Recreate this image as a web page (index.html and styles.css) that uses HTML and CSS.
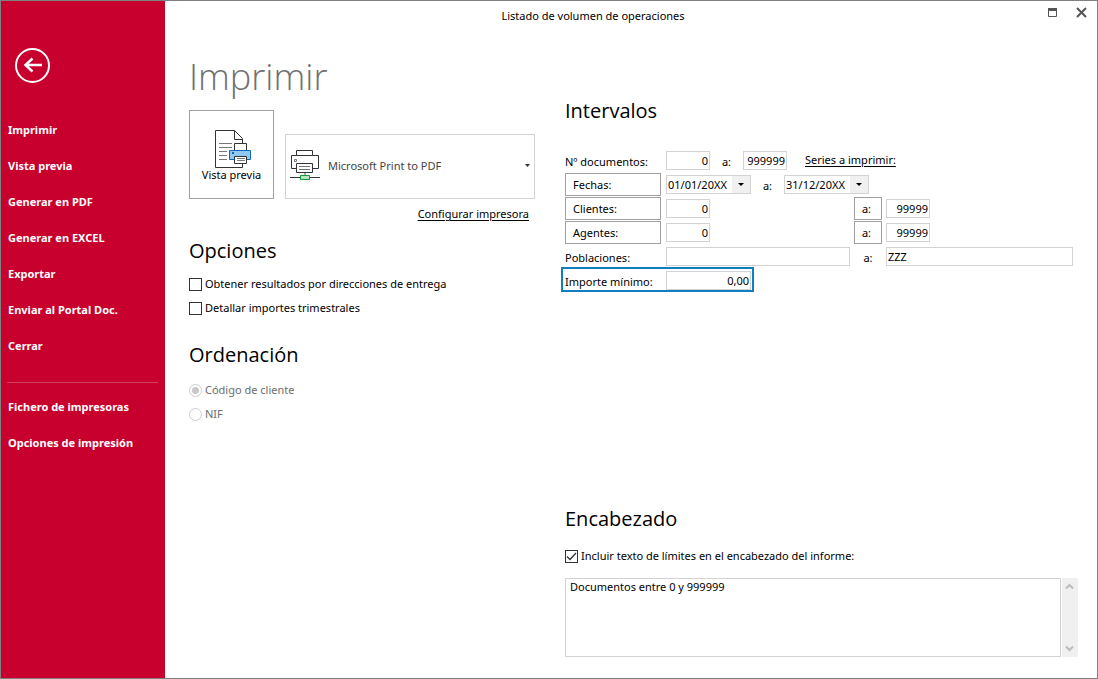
FILE: index.html
```
<!DOCTYPE html>
<html lang="es">
<head>
<meta charset="utf-8">
<meta name="viewport" content="width=device-width, initial-scale=1">
<title>Listado de volumen de operaciones</title>
<link rel="stylesheet" href="styles.css">
</head>
<body>
<div class="window">
  <nav class="sidebar">
    <button class="back" type="button" aria-label="Volver">
      <svg width="36" height="36" viewBox="0 0 36 36" fill="none" stroke="#fff">
        <circle cx="17.5" cy="17.5" r="16.5" stroke-width="2"/>
        <path d="M27 17H10M17.500 10.500L10.500 17l7 6.500" stroke-width="2.500"/>
      </svg>
    </button>
    <ul class="menu">
      <li><button type="button">Imprimir</button></li>
      <li><button type="button">Vista previa</button></li>
      <li><button type="button">Generar en PDF</button></li>
      <li><button type="button">Generar en EXCEL</button></li>
      <li><button type="button">Exportar</button></li>
      <li><button type="button">Enviar al Portal Doc.</button></li>
      <li><button type="button">Cerrar</button></li>
    </ul>
    <hr class="divider">
    <ul class="menu">
      <li><button type="button">Fichero de impresoras</button></li>
      <li><button type="button">Opciones de impresión</button></li>
    </ul>
  </nav>

  <div class="content">
    <header class="titlebar">
      <div class="title">Listado de volumen de operaciones</div>
      <div class="controls">
        <button type="button" aria-label="Maximizar">
          <svg width="9" height="9" viewBox="0 0 9 9"><path d="M.5.5h8v8h-8z" fill="none" stroke="#555"/><path d="M0 0h9v3H0z" fill="#555"/></svg>
        </button>
        <button type="button" aria-label="Cerrar ventana">
          <svg width="11" height="11" viewBox="0 0 11 11"><path d="M1 1l9 9M10 1l-9 9" stroke="#555" stroke-width="2"/></svg>
        </button>
      </div>
    </header>

    <main class="panes">
      <div class="pane-left">
        <h1>Imprimir</h1>
        <div class="print-row">
          <button class="preview" type="button">
            <svg width="37" height="38" viewBox="0 0 37 38" fill="none">
              <path d="M.5.5h19l8 8v29H.5z" fill="#fff" stroke="#333"/>
              <path d="M19.500.5v9h8" stroke="#333"/>
              <path d="M4 13.500h13M4 17.500h13M4 21.500h8M4 25.500h8M4 29.500h8" stroke="#777"/>
              <path d="M19.500 13.500h12v7h-12z" fill="#fff" stroke="#333"/>
              <path d="M14.500 20.500h21v9h-21z" fill="#92c8ef" stroke="#1066b8"/>
              <path d="M17 22h2v2h-2z" fill="#1066b8"/>
              <path d="M19.500 26.500h12v7h-12z" fill="#fff" stroke="#333"/>
              <path d="M22 28.500h8M22 30.500h8" stroke="#777"/>
            </svg>
            <span>Vista previa</span>
          </button>
          <div class="printer">
            <svg width="30" height="31" viewBox="0 0 30 31" fill="none">
              <path d="M1.500 5.500h27v13h-27z" fill="#fff" stroke="#333"/>
              <path d="M6.500.5h16v5h-16zM6.500 13.500h16v9h-16z" fill="#fff" stroke="#333"/>
              <path d="M4.500 9.500h2v2h-2z" stroke="#777"/>
              <path d="M9 16.500h11M9 19.500h11" stroke="#777"/>
              <path d="M15 23v3" stroke="#aaa" stroke-width="2"/>
              <path d="M0 27.500h30" stroke="#333"/>
              <path d="M10.500 25.500h9v4h-9z" fill="#b8e6c0" stroke="#0b9a3c"/>
            </svg>
            <select aria-label="Impresora"><option>Microsoft Print to PDF</option></select>
          </div>
        </div>
        <div class="configure"><a href="#">Configurar impresora</a></div>

        <section class="group">
          <h2>Opciones</h2>
          <label class="check"><input type="checkbox">Obtener resultados por direcciones de entrega</label>
          <label class="check"><input type="checkbox">Detallar importes trimestrales</label>
        </section>

        <section class="group">
          <h2>Ordenación</h2>
          <label class="check off"><input type="radio" name="orden" checked disabled>Código de cliente</label>
          <label class="check off"><input type="radio" name="orden" disabled>NIF</label>
        </section>
      </div>

      <div class="pane-right">
        <section class="ranges">
          <h2>Intervalos</h2>
          <div class="row row-docs">
            <label for="doc-from">Nº documentos:</label>
            <input id="doc-from" class="num" type="text" value="0">
            <label class="to" for="doc-to">a:</label>
            <input id="doc-to" class="num" type="text" value="999999">
            <a href="#">Series a imprimir:</a>
          </div>
          <div class="row row-dates">
            <button class="key" type="button">Fechas:</button>
            <select class="date" aria-label="Fecha inicial"><option>01/01/20XX</option></select>
            <label class="to" for="date-to">a:</label>
            <select id="date-to" class="date"><option>31/12/20XX</option></select>
          </div>
          <div class="row row-wide">
            <button class="key" type="button">Clientes:</button>
            <input class="num" type="text" value="0" aria-label="Cliente inicial">
            <button class="key to" type="button">a:</button>
            <input class="num" type="text" value="99999" aria-label="Cliente final">
          </div>
          <div class="row row-wide">
            <button class="key" type="button">Agentes:</button>
            <input class="num" type="text" value="0" aria-label="Agente inicial">
            <button class="key to" type="button">a:</button>
            <input class="num" type="text" value="99999" aria-label="Agente final">
          </div>
          <div class="row row-wide">
            <label for="city-from">Poblaciones:</label>
            <input id="city-from" type="text">
            <label class="to" for="city-to">a:</label>
            <input id="city-to" type="text" value="ZZZ">
          </div>
          <div class="row row-amount">
            <label for="amount">Importe mínimo:</label>
            <input id="amount" class="amount" type="text" value="0,00">
          </div>
        </section>

        <section class="heading">
          <h2>Encabezado</h2>
          <label class="check"><input type="checkbox" checked>Incluir texto de límites en el encabezado del informe:</label>
          <div class="memo">
            <textarea aria-label="Texto del encabezado">Documentos entre 0 y 999999</textarea>
            <div class="scroll">
              <button type="button" aria-label="Subir"><svg width="9" height="7" viewBox="0 0 9 7"><path d="M1 5.500l3.500-3.500L8 5.500" fill="none" stroke="#bbb" stroke-width="2"/></svg></button>
              <button type="button" aria-label="Bajar"><svg width="9" height="7" viewBox="0 0 9 7"><path d="M1 1.500L4.500 5 8 1.500" fill="none" stroke="#bbb" stroke-width="2"/></svg></button>
            </div>
          </div>
        </section>
      </div>
    </main>
  </div>
</div>
</body>
</html>
```
FILE: styles.css
```
* {
  box-sizing: border-box;
}

body {
  margin: 0;
  font-family: "Noto Sans", "Open Sans", sans-serif;
  font-size: 11px;
  line-height: 16px;
  color: #000;
  background: #fff;
}

button,
input,
select,
textarea {
  margin: 0;
  font: inherit;
  color: inherit;
  border-radius: 0;
}

button {
  padding: 0;
  border: 0;
  background: none;
}

svg {
  display: block;
}

a {
  color: inherit;
  text-underline-offset: 2px;
}

h1,
h2 {
  margin: 0;
  font-family: "Open Sans", "Noto Sans", sans-serif;
  font-weight: 400;
}

h1 {
  font-size: 36px;
  font-weight: 300;
  line-height: 48px;
  color: #707070;
}

h2 {
  font-size: 20px;
  line-height: 28px;
}

.window {
  display: flex;
  min-height: 100vh;
  border: 1px solid #808080;
}

/* Sidebar */
.sidebar {
  flex: none;
  width: 164px;
  padding: 47px 7px 0 6px;
  color: #fff;
  background: #c8002d;
}

.back {
  display: block;
  margin: 0 8px 28px;
}

.menu {
  margin: 0;
  padding: 0 0 0 1px;
  list-style: none;
}

.menu button {
  display: block;
  width: 100%;
  height: 36px;
  text-align: left;
  font-weight: 700;
}

.divider {
  height: 1px;
  margin: 18px 0 6px;
  border: 0;
  background: #d3405f;
}

/* Title bar */
.content {
  flex: 1;
  display: flex;
  flex-direction: column;
}

.titlebar {
  display: flex;
  height: 30px;
}

.title {
  flex: 1;
  line-height: 30px;
  text-align: center;
}

.controls {
  display: flex;
  align-items: center;
  justify-content: flex-end;
  gap: 19px;
  width: 76px;
  height: 23px;
  padding-right: 10px;
}

/* Columns */
.panes {
  flex: 1;
  display: grid;
  grid-template-columns: 346px 1fr;
  gap: 30px;
  padding: 22px 19px 21px 24px;
}

.print-row {
  display: flex;
  align-items: flex-end;
  gap: 11px;
  margin-top: 9px;
}

.preview {
  display: flex;
  flex-direction: column;
  align-items: center;
  width: 85px;
  height: 89px;
  padding-top: 19px;
  border: 1px solid #a0a0a0;
}

.preview svg {
  margin: 0 0 -1px 4px;
}

.printer {
  flex: 1;
  display: flex;
  align-items: center;
  height: 65px;
  padding: 0 3px 2px 4px;
  border: 1px solid #d3d3d3;
}

select {
  appearance: none;
  border: 0;
  background: #fff url("data:image/svg+xml,%3Csvg xmlns='http://www.w3.org/2000/svg' width='5' height='3'%3E%3Cpath d='M0 0h5L2.500 3z' fill='%23333'/%3E%3C/svg%3E") no-repeat right 1px center;
}

.printer select {
  flex: 1;
  height: 48px;
  padding: 0 8px;
  color: #444;
}

.configure {
  margin: 7px 6px 0;
  text-align: right;
}

.group {
  margin-top: 15px;
}

.group + .group {
  margin-top: 21px;
}

.group h2 {
  margin-bottom: 7px;
}

.group + .group h2 {
  margin-bottom: 9px;
}

.check {
  display: flex;
  align-items: center;
  gap: 3px;
  height: 24px;
}

.check input {
  appearance: none;
  width: 13px;
  height: 13px;
  border: 1px solid #333;
  background: #fff;
}

.check input:checked {
  background: #fff url("data:image/svg+xml,%3Csvg xmlns='http://www.w3.org/2000/svg' width='11' height='11'%3E%3Cpath d='M1 5.500l3 3L10 2' fill='none' stroke='%23333' stroke-width='1.300'/%3E%3C/svg%3E") center no-repeat;
}

.check input[type="radio"] {
  border-color: #ccc;
  border-radius: 50%;
}

.check input[type="radio"]:checked {
  background: radial-gradient(circle, #c8c8c8 3px, #fff 4px);
}

.off {
  color: #6d6d6d;
}

/* Ranges */
.pane-right {
  display: flex;
  flex-direction: column;
  justify-content: space-between;
}

.ranges {
  padding: 44px 5px 0 0;
}

.ranges h2 {
  margin-bottom: 24px;
}

.row {
  display: grid;
  align-items: start;
  height: 24px;
}

.row-docs {
  grid-template-columns: 101px 44px 33px 44px 1fr;
}

.row-docs a {
  margin: 3px 0 0 18px;
}

.row-dates {
  grid-template-columns: 101px 85px 33px 85px;
}

.row-wide {
  grid-template-columns: 101px minmax(0, 184px) 36px minmax(0, 1fr);
}

.row-amount {
  grid-template-columns: 97px 85px;
  gap: 4px;
  width: 193px;
  height: 25px;
  margin: -2px 0 0 -4px;
  padding: 0 2px;
  border: 2px solid #0f7fc0;
}

.row label {
  padding-top: 5px;
}

.row .to {
  text-align: center;
}

.row input,
.date {
  width: 100%;
  height: 19px;
  margin-top: 2px;
  padding: 0 1px;
  border: 1px solid #d3d3d3;
  background-color: #fff;
}

.row input {
  padding-bottom: 1px;
}

.row .num {
  width: 44px;
}

.num,
.amount {
  text-align: right;
}

.date {
  background:
    url("data:image/svg+xml,%3Csvg xmlns='http://www.w3.org/2000/svg' width='6' height='3'%3E%3Cpath d='M0 0h6L3 3z'/%3E%3C/svg%3E") no-repeat right 6px center,
    linear-gradient(#f0f0f0, #f0f0f0) no-repeat right / 18px 100%;
}

.key {
  width: 96px;
  height: 23px;
  padding: 0 7px;
  border: 1px solid #a0a0a0;
  text-align: left;
}

.key.to {
  justify-self: center;
  width: 28px;
  padding: 0 3px 0 0;
}

/* Report heading */
.heading h2 {
  margin-bottom: 11px;
}

.heading .check {
  margin-bottom: 10px;
}

.memo {
  display: flex;
  gap: 1px;
}

.memo textarea {
  flex: 1;
  height: 79px;
  padding: 0 4px;
  border: 1px solid #d3d3d3;
  resize: none;
}

.scroll {
  display: flex;
  flex-direction: column;
  justify-content: space-between;
  width: 16px;
  background: #f0f0f0;
}

.scroll button {
  display: grid;
  place-items: center;
  height: 17px;
  padding-right: 1px;
}
```
